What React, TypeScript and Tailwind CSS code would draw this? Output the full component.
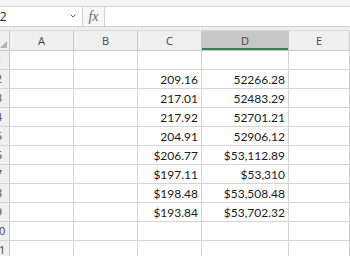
import React from 'react'

type Row = { c?: string; d?: string }

const rows: Row[] = [
  {},
  { c: '209.16', d: '52266.28' },
  { c: '217.01', d: '52483.29' },
  { c: '217.92', d: '52701.21' },
  { c: '204.91', d: '52906.12' },
  { c: '$206.77', d: '$53,112.89' },
  { c: '$197.11', d: '$53,310' },
  { c: '$198.48', d: '$53,508.48' },
  { c: '$193.84', d: '$53,702.32' },
  {},
  {},
]

const uiFont = { fontFamily: '"Open Sans", "Noto Sans", sans-serif' }
const cellFont = { fontFamily: 'Lato, "Liberation Sans", sans-serif' }

const HeaderCell: React.FC<{ label: string; width: string; selected?: boolean }> = ({
  label,
  width,
  selected,
}) => (
  <div
    className={`${width} relative flex shrink-0 items-center justify-center border-r border-[#c9c9c9] pt-[1px] text-[11px] text-[#444] ${
      selected ? 'bg-[#c7c7c7]' : ''
    }`}
  >
    {label}
    {selected ? <div className="absolute bottom-0 left-0 right-0 h-[2px] bg-[#3f7a56]" /> : null}
  </div>
)

const Cell: React.FC<{ value?: string; width: string }> = ({ value, width }) => (
  <div
    className={`${width} flex shrink-0 items-end justify-end border-r border-[#d4d4d4] pr-[3px] pb-[1px] text-[12px] leading-[14px] text-[#1a1a1a]`}
    style={cellFont}
  >
    {value}
  </div>
)

export default function App() {
  return (
    <div className="h-[256px] w-[350px] overflow-hidden bg-white" style={uiFont}>
      <div className="h-[7px] border-b border-[#d6d6d6] bg-[#f3f3f3]" />

      {/* formula bar */}
      <div className="flex h-[20px] border-b border-[#d0d0d0]">
        <div className="relative flex w-[83px] shrink-0 items-center overflow-hidden border-r border-[#d0d0d0] text-[12px] text-[#222]">
          <span className="ml-[-9px]">D2</span>
          <svg className="absolute left-[70px] top-[7px]" width="6" height="4" viewBox="0 0 6 4">
            <path d="M0.5 0.5 L3 3 L5.5 0.5" fill="none" stroke="#666" strokeWidth="1" />
          </svg>
        </div>
        <div
          className="flex w-[22px] shrink-0 items-center justify-center border-r border-[#d0d0d0] bg-[#f7f7f7] text-[14px] italic text-[#666]"
          style={{ fontFamily: '"Liberation Serif", serif' }}
        >
          fx
        </div>
        <div className="flex-1" />
      </div>

      <div className="h-[4px] border-b border-[#d6d6d6] bg-[#efefef]" />

      {/* column headers */}
      <div className="flex h-[20px] border-b border-[#c9c9c9] bg-[#efefef]">
        <div className="relative w-[10px] shrink-0 border-r border-[#c9c9c9]">
          <svg className="absolute bottom-[2px] right-[2px]" width="7" height="7" viewBox="0 0 7 7">
            <path d="M7 0 L7 7 L0 7 Z" fill="#b5b5b5" />
          </svg>
        </div>
        <HeaderCell label="A" width="w-[64px]" />
        <HeaderCell label="B" width="w-[64px]" />
        <HeaderCell label="C" width="w-[64px]" />
        <HeaderCell label="D" width="w-[87px]" selected />
        <HeaderCell label="E" width="flex-1" />
      </div>

      {rows.map((row, i) => (
        <div key={i} className="flex h-[19px] border-b border-[#d4d4d4]">
          <div className="w-[10px] shrink-0 overflow-hidden border-r border-[#c9c9c9] bg-[#efefef]">
            <div className="ml-[-16px] flex h-full w-[30px] items-center justify-center text-[11px] text-[#444]">
              {i + 1}
            </div>
          </div>
          <Cell width="w-[64px]" />
          <Cell width="w-[64px]" />
          <Cell width="w-[64px]" value={row.c} />
          <Cell width="w-[87px]" value={row.d} />
          <Cell width="flex-1" />
        </div>
      ))}
    </div>
  )
}
